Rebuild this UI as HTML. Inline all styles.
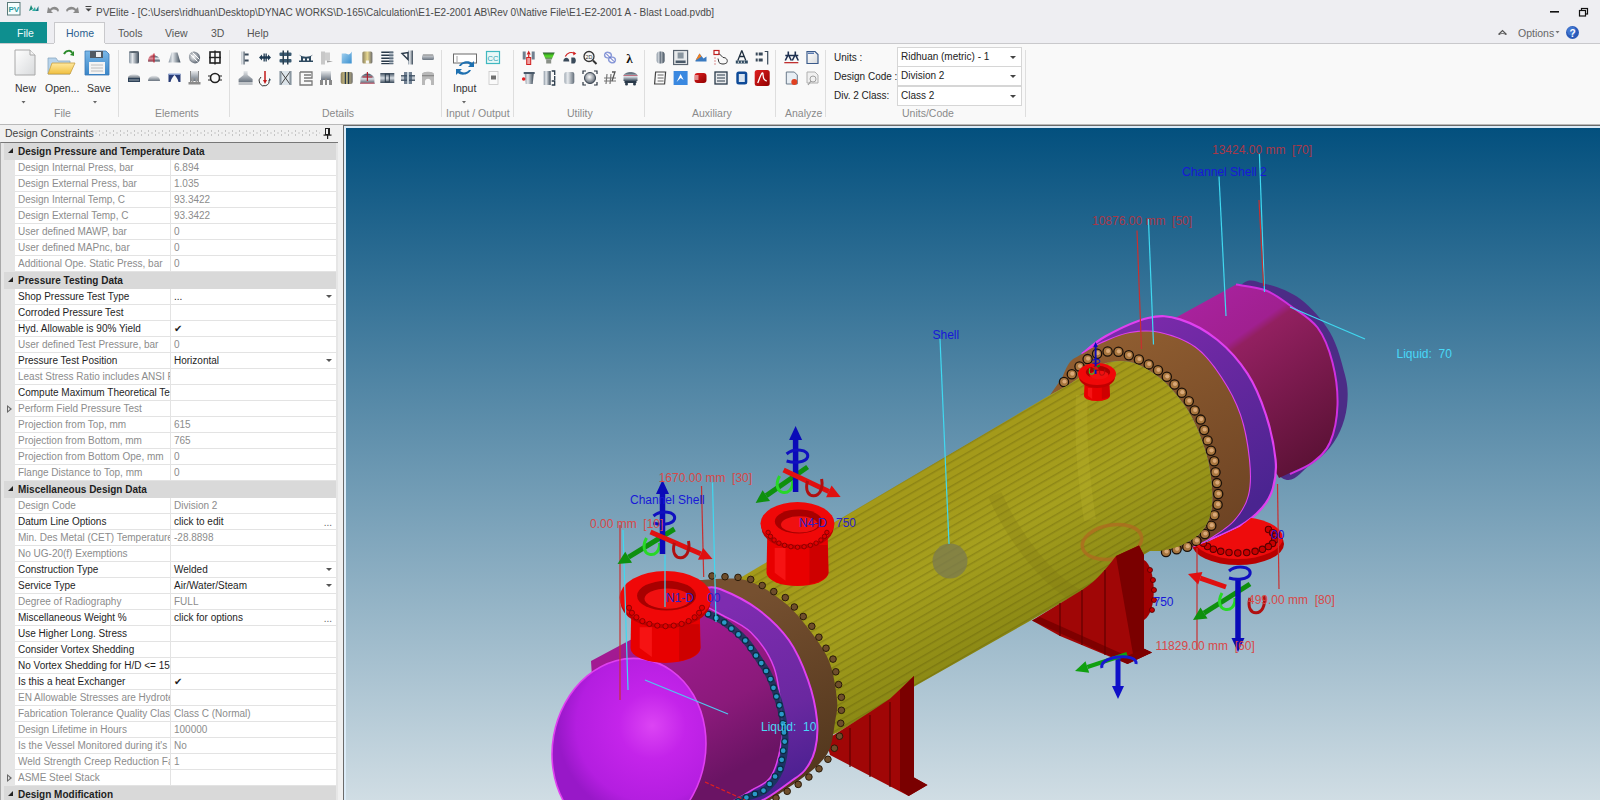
<!DOCTYPE html>
<html><head><meta charset="utf-8">
<style>
*{margin:0;padding:0;box-sizing:border-box}
html,body{width:1600px;height:800px;overflow:hidden;background:#f0f0f0;font-family:"Liberation Sans",sans-serif;font-size:10px;color:#222}
.a{position:absolute;white-space:nowrap}
#title{left:0;top:0;width:1600px;height:43px;background:#eeeef2}
#ribbon{left:0;top:43px;width:1600px;height:82px;background:#f9f9f9;border-top:1px solid #c9c9cc;border-bottom:1px solid #b9b9b9}
.sep{position:absolute;top:50px;width:1px;height:67px;background:#dedede}
.glab{position:absolute;top:107px;color:#8a8a8a;font-size:10.5px}
.btnlab{position:absolute;top:82px;color:#333;font-size:10.5px}
.tab{position:absolute;top:27px;font-size:10.5px;color:#555}
#dchdr{left:1px;top:125px;width:337px;height:17px;background:#f0f0f0}
#grid{left:0;top:142px;width:338px;height:658px;background:#e6e6e6;border-top:1px solid #777;border-left:1px solid #a8a8a8}
.row{position:absolute;left:15px;width:321px;height:16px;background:#fff;border-bottom:1px solid #e3e3e3}
.row .k{position:absolute;left:3px;top:2px;width:152px;overflow:hidden;white-space:nowrap}
.row .v{position:absolute;left:159px;top:2px;white-space:nowrap}
.row .d{position:absolute;left:155px;top:0;width:1px;height:16px;background:#e3e3e3}
.g{color:#8c8c8c}
.b{color:#1e1e1e}
.sh{position:absolute;left:4px;width:332px;height:17px;background:#d9d9d9}
.sh span{position:absolute;left:14px;top:3px;font-weight:bold;color:#1e1e1e}
.tri{position:absolute;left:4px;top:5px;width:0;height:0;border-left:5.5px solid transparent;border-bottom:5.5px solid #222}
.dd{position:absolute;right:4px;top:6px;width:0;height:0;border-left:3px solid transparent;border-right:3px solid transparent;border-top:3px solid #555}
.ell{position:absolute;right:4px;top:3px;color:#666}
.exp{position:absolute;left:-8px;top:4px;width:0;height:0;border-top:4px solid transparent;border-bottom:4px solid transparent;border-left:5px solid #666}
.exp:after{content:"";position:absolute;left:-4px;top:-2px;border-top:2px solid transparent;border-bottom:2px solid transparent;border-left:2px solid #e6e6e6}
#view{left:343px;top:125px;width:1257px;height:675px;background:#dcecf8;border-left:1px solid #6a6a6a;border-top:1px solid #6a6a6a}
#view3d{position:absolute;left:346px;top:128px;width:1254px;height:672px;background:linear-gradient(#03507e,#d0dde4)}
.cmb{position:absolute;left:897px;width:125px;height:20px;background:#fff;border:1px solid #d6d6d6}
.cmb span{position:absolute;left:3px;top:3px;color:#222}
.cmb i{position:absolute;right:5px;top:8px;width:0;height:0;border-left:3.5px solid transparent;border-right:3.5px solid transparent;border-top:3.5px solid #444}
.ulab{position:absolute;left:834px;color:#222}
</style></head><body>

<div id="title" class="a"></div>
<!-- title text -->
<div class="a" style="left:96px;top:7px;color:#4a4a4a;font-size:10px">PVElite - [C:\Users\ridhuan\Desktop\DYNAC WORKS\D-165\Calculation\E1-E2-2001 AB\Rev 0\Native File\E1-E2-2001 A - Blast Load.pvdb]</div>

<!--TITLEICONS-->
<svg class="a" style="left:0;top:0" width="100" height="22" viewBox="0 0 100 22">
<rect x="7.5" y="2.5" width="12.5" height="12.5" fill="#f4fefe" stroke="#5a7a7a" stroke-width="1"/>
<text x="13.8" y="12" font-size="8" font-weight="bold" text-anchor="middle" fill="#2a9aa0" font-family="Liberation Sans">PV</text>
<path d="M29,11 L31,5 L33,9 Z" fill="#1a8a7a"/><path d="M32,11 L35,7 L36,11 Z" fill="#30b0a0"/><path d="M35.5,11 L38.5,6 L38.5,11Z" fill="#1a7a8a"/>
<path d="M47,13 L48,7 L50,9 C53,6 57,6 59,10 L58,12 C56,9 53,9 51,11 L53,13 Z" fill="#8a8a8a"/>
<path d="M79,13 L78,7 L76,9 C73,6 69,6 66,10 L67,12 C69,9 73,9 75,11 L73,13 Z" fill="#8a8a8a"/>
<rect x="85.5" y="6" width="6" height="1" fill="#444"/><path d="M85.5,8.5 L91.5,8.5 L88.5,11.5Z" fill="#444"/>
</svg>
<svg class="a" style="left:1490px;top:0" width="110" height="43" viewBox="1490 0 110 43">
<rect x="1550" y="11" width="9" height="1.6" fill="#111"/>
<rect x="1581.5" y="8.5" width="6" height="5.5" fill="none" stroke="#111" stroke-width="1.2"/>
<rect x="1579.5" y="10.5" width="6" height="5.5" fill="#eeeef2" stroke="#111" stroke-width="1.2"/>
<path d="M1498.5,34.5 L1502.5,30.5 L1506.5,34.5" fill="none" stroke="#555" stroke-width="1.2"/><path d="M1499,35 C1500,33 1505,33 1506,35" fill="none" stroke="#555" stroke-width="1"/>
<path d="M1555.5,31 L1559.5,31 L1557.5,33.5Z" fill="#777"/>
<circle cx="1572.5" cy="32.5" r="6.5" fill="#2a5ab8"/><circle cx="1571.5" cy="31" r="4.5" fill="#4a80d8" opacity="0.7"/>
<text x="1572.5" y="36.5" font-size="10" font-weight="bold" text-anchor="middle" fill="#fff" font-family="Liberation Sans">?</text>
</svg>
<!--/TITLEICONS-->
<!-- tabs -->
<div class="a" style="left:0;top:22px;width:47px;height:21px;background:#0e8f8f"></div>
<div class="a" style="left:17px;top:27px;color:#eafafa;font-size:10.5px">File</div>
<div class="a" style="left:54px;top:22px;width:51px;height:22px;background:#f9f9f9;border:1px solid #c9c9cc;border-bottom:none"></div>
<div class="tab" style="left:66px;color:#2a5f8f">Home</div>
<div class="tab" style="left:118px">Tools</div>
<div class="tab" style="left:165px">View</div>
<div class="tab" style="left:211px">3D</div>
<div class="tab" style="left:247px">Help</div>

<div id="ribbon" class="a"></div>
<div class="a" style="left:54px;top:43px;width:51px;height:1px;background:#f9f9f9"></div>

<!--ICONS-->
<svg class="a" style="left:0;top:43px" width="1030" height="82" viewBox="0 43 1030 82">
<defs>
<linearGradient id="ig1" x1="0" y1="0" x2="1" y2="0"><stop offset="0" stop-color="#8a96a2"/><stop offset="0.35" stop-color="#e4e8ec"/><stop offset="1" stop-color="#3c4a58"/></linearGradient>
<linearGradient id="ig2" x1="0" y1="0" x2="0" y2="1"><stop offset="0" stop-color="#e8eaec"/><stop offset="1" stop-color="#6a7480"/></linearGradient>
<linearGradient id="ig3" x1="0" y1="0" x2="1" y2="0"><stop offset="0" stop-color="#8a8060"/><stop offset="0.5" stop-color="#e8d890"/><stop offset="1" stop-color="#6a6a6a"/></linearGradient>
<linearGradient id="ig4" x1="0" y1="0" x2="0" y2="1"><stop offset="0" stop-color="#3a4a5a"/><stop offset="0.5" stop-color="#d8dee4"/><stop offset="1" stop-color="#3a4a5a"/></linearGradient>
<linearGradient id="ig5" x1="0" y1="0" x2="1" y2="1"><stop offset="0" stop-color="#a8d4f0"/><stop offset="1" stop-color="#3a90d0"/></linearGradient>
<linearGradient id="igs" x1="0" y1="0" x2="0" y2="1"><stop offset="0" stop-color="#7ab8e8"/><stop offset="1" stop-color="#3a86c8"/></linearGradient>
<linearGradient id="igf" x1="0" y1="0" x2="0" y2="1"><stop offset="0" stop-color="#ffe9a0"/><stop offset="1" stop-color="#f0c040"/></linearGradient>
<linearGradient id="ign" x1="0" y1="0" x2="1" y2="1"><stop offset="0" stop-color="#ffffff"/><stop offset="1" stop-color="#d8dadc"/></linearGradient>
<radialGradient id="igb" cx="0.45" cy="0.4" r="0.6"><stop offset="0" stop-color="#ffffff"/><stop offset="1" stop-color="#5a6470"/></radialGradient>
<linearGradient id="igg" x1="0" y1="0" x2="0" y2="1"><stop offset="0" stop-color="#2a5a30"/><stop offset="0.5" stop-color="#50e020"/><stop offset="1" stop-color="#708070"/></linearGradient>
<linearGradient id="igr" x1="0" y1="0" x2="1" y2="1"><stop offset="0" stop-color="#e02020"/><stop offset="1" stop-color="#900000"/></linearGradient>
</defs>
<g transform="translate(134,57.5)"><rect x="-5" y="-6" width="10" height="12" rx="1.5" fill="url(#ig1)"/><ellipse cx="0" cy="-5.5" rx="5" ry="1" fill="#5a6670"/></g>
<g transform="translate(134,78)"><path d="M-6,0 C-6,-5 6,-5 6,0 Z" fill="url(#ig2)"/><rect x="-6" y="0" width="12" height="4" fill="#2e4258"/><line x1="-5" y1="2" x2="5" y2="2" stroke="#b8c0c8" stroke-width="0.8"/></g>
<g transform="translate(154,57.5)"><path d="M-6,4 C-6,-4 6,-4 6,4 Z" fill="url(#ig4)"/><path d="M-6,4 C-6,-3 -1,-3 0,-3 L0,4Z" fill="#e03040" opacity="0.5"/><line x1="0" y1="-4" x2="0" y2="5" stroke="#c02030" stroke-width="1.2"/></g>
<g transform="translate(154,78)"><path d="M-6,3 C-6,-4 6,-4 6,3 Z" fill="url(#ig2)"/></g>
<g transform="translate(174.5,57.5)"><path d="M-3,-5 L3,-5 L6,5 L-6,5 Z" fill="url(#ig1)"/></g>
<g transform="translate(174.5,78)"><path d="M-6,-4 L6,-4 L6,4 L4,4 C3,0 1,-2 0,-3 C-1,-2 -3,0 -4,4 L-6,4Z" fill="#2a3e78"/><rect x="-6" y="-4.5" width="12" height="1.5" fill="#8aa0d0"/></g>
<g transform="translate(194.5,57.5)"><ellipse cx="0" cy="0" rx="5.5" ry="6" fill="url(#igb)" transform="rotate(-30)"/><path d="M-4,-3 L3,4 M-2,-5 L5,2" stroke="#fff" stroke-width="1"/></g>
<g transform="translate(194.5,78)"><rect x="-4" y="-7" width="8" height="10" fill="url(#ig2)"/><line x1="-4" y1="-7" x2="-4" y2="5" stroke="#888" stroke-width="1"/><line x1="4" y1="-7" x2="4" y2="5" stroke="#888" stroke-width="1"/><rect x="-6" y="4" width="12" height="2.5" fill="#8a8a8a"/><rect x="-3" y="0" width="2" height="4" fill="#999"/><rect x="1" y="0" width="2" height="4" fill="#999"/></g>
<g transform="translate(215,57.5)"><rect x="-5" y="-5.5" width="10" height="11" fill="none" stroke="#222" stroke-width="1.6"/><line x1="0" y1="-7" x2="0" y2="7" stroke="#222" stroke-width="1.4"/><line x1="-6" y1="0" x2="6" y2="0" stroke="#222" stroke-width="1.4"/></g>
<g transform="translate(215,78)"><circle cx="0" cy="0" r="4.5" fill="none" stroke="#222" stroke-width="1.6"/><path d="M-7,-2 L-4,-2 M-7,2 L-4,2 M4,-2 L7,-2 M4,2 L7,2" stroke="#222" stroke-width="1.2"/></g>
<g transform="translate(245.6,57.5)"><rect x="-4" y="-6" width="3" height="13" fill="url(#ig1)"/><rect x="-1" y="-4" width="4" height="2" fill="#3a4a5a"/><rect x="-1" y="2" width="4" height="2" fill="#3a4a5a"/></g>
<g transform="translate(245.6,78)"><path d="M-2,-7 L2,-7 L2,-3 C4,-2 5,0 7,1 L7,4 L-7,4 L-7,1 C-5,0 -4,-2 -2,-3Z" fill="url(#ig2)"/><rect x="-7" y="4" width="14" height="3" fill="#c0c4c8"/></g>
<g transform="translate(265,57.5)"><path d="M-6,0 L-3,-3 L-3,3Z M6,0 L3,-3 L3,3Z" fill="#1e3a52"/><rect x="-3" y="-1.2" width="6" height="2.4" fill="#1e3a52"/><rect x="-1.5" y="-4" width="1.3" height="8" fill="#1e3a52"/><rect x="0.5" y="-4" width="1.3" height="8" fill="#1e3a52"/></g>
<g transform="translate(265,78)"><path d="M-4,-1 A5,5 0 1 0 4,2" fill="none" stroke="#333" stroke-width="1"/><line x1="0" y1="-7" x2="0" y2="4" stroke="#c01818" stroke-width="1.5"/><path d="M-2,2 L0,6 L2,2Z" fill="#c01818"/><path d="M4,0 L6,2 L4,3Z" fill="#2a4a5a"/></g>
<g transform="translate(285.5,57.5)"><rect x="-6" y="-5" width="12" height="3.5" rx="1" fill="#3a5a72"/><rect x="-6" y="1.5" width="12" height="3.5" rx="1" fill="#3a5a72"/><rect x="-3" y="-7" width="1.5" height="14" fill="#2a4050"/><rect x="1.5" y="-7" width="1.5" height="14" fill="#2a4050"/></g>
<g transform="translate(285.5,78)"><rect x="-6" y="-7" width="12" height="14" fill="#dce4ea"/><path d="M-5,-7 L5,7 M5,-7 L-5,7" stroke="#444" stroke-width="1"/><rect x="-6" y="-7" width="2" height="14" fill="#8a96a0"/><rect x="4" y="-7" width="2" height="14" fill="#8a96a0"/></g>
<g transform="translate(306,57.5)"><path d="M-7,-3 C-3,0 3,0 7,-3 L5,-1 L5,3 L7,3 L7,4.5 L-7,4.5 L-7,3 L-5,3 L-5,-1Z" fill="#2e4a60"/><rect x="-3" y="1" width="2" height="2" fill="#fff"/><rect x="1" y="1" width="2" height="2" fill="#fff"/></g>
<g transform="translate(306,78)"><path d="M-6,-6 L6,-6 L6,0 L-2,0 M-2,-3 L5,-3 M-6,-6 L-6,7 L6,7 L6,3 L-2,3" fill="none" stroke="#7a7a7a" stroke-width="1.3"/></g>
<g transform="translate(326,57.5)"><rect x="-5" y="-6" width="4" height="13" fill="#c8c8c8"/><rect x="-1" y="-5" width="5" height="8" fill="#b0b0b0" opacity="0.6"/><path d="M1,3 L7,4 L1,5Z" fill="#a0a0a0"/></g>
<g transform="translate(326,78)"><rect x="-5" y="-7" width="10" height="9" fill="url(#ig2)"/><rect x="-6" y="2" width="3" height="5" fill="#8a8a8a"/><rect x="-1" y="0" width="2" height="7" fill="#8a8a8a"/><rect x="3" y="2" width="3" height="5" fill="#8a8a8a"/></g>
<g transform="translate(346.7,57.5)"><path d="M-5,-4 L-1,-4 C1,-3 3,-2 5,-6 L5,6 L-5,6 Z" fill="url(#ig5)"/></g>
<g transform="translate(346.7,78)"><rect x="-6" y="-6" width="12" height="12" rx="2" fill="url(#ig3)"/><rect x="-2" y="-6" width="1.5" height="12" fill="#2a3a4a"/><rect x="1" y="-6" width="1.5" height="12" fill="#2a3a4a"/></g>
<g transform="translate(367.4,57.5)"><rect x="-5" y="-6" width="10" height="12" rx="1.5" fill="url(#ig3)"/><rect x="-1.5" y="3" width="3" height="3" fill="#fafafa"/></g>
<g transform="translate(367.4,78)"><path d="M-7,0 C-4,-6 4,-6 7,0 L7,6 L-7,6Z" fill="url(#ig4)"/><rect x="-7" y="4.5" width="14" height="1.5" fill="#c07080"/><line x1="0" y1="-6" x2="0" y2="3" stroke="#b02030" stroke-width="1.2"/><line x1="-5" y1="-1" x2="5" y2="-1" stroke="#b02030" stroke-width="1"/></g>
<g transform="translate(387.3,57.5)"><g fill="#2a3a4a"><rect x="-6" y="-6" width="12" height="1.5"/><rect x="-6" y="-3" width="12" height="1.5"/><rect x="-6" y="0" width="12" height="1.5"/><rect x="-6" y="3" width="12" height="1.5"/><rect x="-6" y="5.5" width="12" height="1.2"/></g><rect x="2" y="-6" width="4" height="12.5" fill="#8a9aa8" opacity="0.6"/></g>
<g transform="translate(387.3,78)"><rect x="-7" y="-5" width="14" height="10" fill="url(#ig4)"/><rect x="-2" y="-4" width="4" height="8" fill="none" stroke="#2a3a4a" stroke-width="1"/></g>
<g transform="translate(408,57.5)"><rect x="0" y="-7" width="5" height="14" fill="url(#ig1)"/><path d="M-6,-4 L0,-5 L0,2 Z" fill="none" stroke="#2a3a4a" stroke-width="1.4"/></g>
<g transform="translate(408,78)"><rect x="-7" y="-3" width="14" height="6" fill="url(#ig4)"/><rect x="-4" y="-6" width="8" height="12" fill="#3a5068" opacity="0.7"/><rect x="-1" y="-6" width="2" height="12" fill="#c8d4dc"/></g>
<g transform="translate(428,57.5)"><rect x="-6" y="-3.5" width="12" height="6" rx="1.5" fill="url(#ig2)"/><rect x="-5" y="-3" width="10" height="1" fill="#888"/></g>
<g transform="translate(428,78)"><path d="M-6,7 L-6,-4 C-6,-7 6,-7 6,-4 L6,7 L3,7 L3,3 C2,0 -2,0 -3,3 L-3,7Z" fill="#b8b8b8"/><rect x="-6" y="-3" width="12" height="1.3" fill="#8a8a8a"/></g>
<g transform="translate(493,57.5)"><rect x="-6.5" y="-6" width="13" height="12" fill="#e8f8f8" stroke="#40b8c0" stroke-width="1.2"/><text x="0" y="3" font-size="7.5" text-anchor="middle" fill="#30a0b0" font-family="Liberation Sans">CC</text></g>
<g transform="translate(493.5,78)"><rect x="-4.5" y="-6.5" width="9" height="13" fill="#fafafa" stroke="#c8c8c8" stroke-width="0.8"/><rect x="-2.5" y="-2.5" width="5" height="4" fill="#707070"/></g>
<g transform="translate(528.7,57.5)"><rect x="-6" y="-6" width="3" height="8" fill="#708090"/><rect x="3" y="-6" width="3" height="8" fill="#708090"/><rect x="-2" y="0" width="4" height="7" fill="#f0a0a0" stroke="#d02020" stroke-width="1"/><path d="M0,-7 L-2,-3 L2,-3Z" fill="#d02020"/><line x1="0" y1="-3" x2="0" y2="0" stroke="#d02020" stroke-width="1.2"/></g>
<g transform="translate(528.7,78)"><path d="M-4,-4 L5,-4 L4,6 L-3,6Z" fill="url(#ig1)"/><rect x="-5" y="-6" width="11" height="2" fill="#4a5a6a"/><circle cx="-5" cy="1" r="1.8" fill="#e02020"/></g>
<g transform="translate(548.7,57.5)"><path d="M-6,-5 L6,-5 L3,2 L-3,2Z" fill="url(#igg)"/><rect x="-2.5" y="2" width="5" height="4" fill="#8a9088"/></g>
<g transform="translate(548.7,78)"><rect x="-5" y="-7" width="7" height="14" fill="url(#ig1)"/><path d="M3,-7 L6,-7 L6,-3 M3,3 L6,3 L6,7 L3,7 M6,-2 L6,2" fill="none" stroke="#2a3a4a" stroke-width="1.3"/></g>
<g transform="translate(569.3,57.5)"><path d="M-6,4 C-6,-1 0,-1 0,4Z" fill="#3a4a5a"/><path d="M-4,-1 C-2,-5 2,-6 5,-4" fill="none" stroke="#d02020" stroke-width="1.2"/><path d="M4,-6 L7,-4 L4,-2Z" fill="#d02020"/><path d="M2,0 L5,0 C7,1 7,5 5,6 L2,6Z" fill="#3a4a5a"/></g>
<g transform="translate(569.3,78)"><rect x="-5" y="-6" width="10" height="12" rx="2" fill="url(#ig1)" opacity="0.8"/></g>
<g transform="translate(590,57.5)"><circle cx="-1" cy="-1" r="5" fill="#f8f8f8" stroke="#333" stroke-width="1.3"/><text x="-1" y="1.5" font-size="5.5" text-anchor="middle" fill="#333" font-family="Liberation Sans">2D</text><line x1="3" y1="3" x2="6.5" y2="6.5" stroke="#333" stroke-width="2"/></g>
<g transform="translate(590,78)"><circle cx="0" cy="0" r="5.5" fill="url(#igb)" stroke="#3a4450" stroke-width="1"/><path d="M-7,-4 L-7,-7 L-4,-7 M4,-7 L7,-7 L7,-4 M7,4 L7,7 L4,7 M-4,7 L-7,7 L-7,4" fill="none" stroke="#2a3440" stroke-width="1.2"/></g>
<g transform="translate(610,57.5)"><path d="M-5,-4 C-7,0 -1,2 1,-1 C3,-4 -3,-7 -5,-4 M5,4 C7,0 1,-2 -1,1 C-3,4 3,7 5,4" fill="none" stroke="#8a9ad8" stroke-width="1.5"/><line x1="-4" y1="-4" x2="4" y2="4" stroke="#4a5ac8" stroke-width="1"/></g>
<g transform="translate(610,78)"><path d="M-6,0 L6,0 M-6,3 L6,3 M-3,-4 L-4,6 M1,-4 L0,6" stroke="#777" stroke-width="1.2"/><path d="M2,-6 L5,-6 L2,3" fill="none" stroke="#555" stroke-width="1.3"/></g>
<g transform="translate(630.5,57.5)"><text x="-1" y="5" font-size="13" text-anchor="middle" fill="#111" font-family="Liberation Serif" font-weight="bold">&#955;</text></g>
<g transform="translate(630.5,78)"><path d="M-7,-2 C-7,-7 7,-7 7,-2 L7,3 L-7,3Z" fill="url(#ig4)"/><rect x="-7" y="-3" width="14" height="1" fill="#c07080"/><rect x="-6" y="3" width="12" height="2" fill="#2a3a4a"/><circle cx="-4" cy="6" r="1.5" fill="#2a3a4a"/><circle cx="4" cy="6" r="1.5" fill="#2a3a4a"/></g>
<g transform="translate(660.6,57.5)"><rect x="-4" y="-6" width="8" height="12" rx="3" fill="url(#ig1)"/><rect x="-1" y="-6" width="1" height="12" fill="#3a4a5a"/></g>
<g transform="translate(660.6,78)"><path d="M-5,-6 L5,-6 L4,6 L-6,6Z" fill="#fafafa" stroke="#444" stroke-width="1.2"/><path d="M-3,-3 L3,-3 M-3,0 L3,0 M-3,3 L3,3" stroke="#555" stroke-width="0.9"/></g>
<g transform="translate(680.6,57.5)"><rect x="-7" y="-7" width="14" height="14" fill="#e8eaec" stroke="#5a6470" stroke-width="1.2"/><rect x="-3" y="-5" width="6" height="6" fill="#8a96a0"/><rect x="-5" y="3" width="10" height="2.5" fill="#4a5a6a"/></g>
<g transform="translate(680.6,78)"><rect x="-7" y="-7" width="14" height="14" fill="#3a88e0"/><path d="M-4,4 L0,-4 L3,2 L0,0 Z" fill="#fff"/></g>
<g transform="translate(700.5,57.5)"><path d="M-5,3 L-1,-4 L3,1 L6,-1 L6,4 L-5,4Z" fill="#3a7ac0"/><path d="M-5,3 L-1,-4 L1,-1Z" fill="#f08020"/></g>
<g transform="translate(700.5,78)"><rect x="-6" y="-5" width="12" height="10" rx="3" fill="url(#igr)"/><rect x="-6" y="-3" width="4" height="5" fill="#fff" opacity="0.5"/></g>
<g transform="translate(721,57.5)"><rect x="-7" y="-7" width="5" height="4" fill="#fff" stroke="#c02020" stroke-width="1.2"/><path d="M-6,0 L-6,1 M-6,3 L-6,4 M-6,6 L-6,7" stroke="#c02020" stroke-width="1"/><path d="M-2,-4 L2,0 C5,0 7,2 6,5 C4,7 0,7 -2,5 L-3,1" fill="none" stroke="#333" stroke-width="1"/></g>
<g transform="translate(721,78)"><rect x="-6" y="-6" width="12" height="12" fill="#e8eaec" stroke="#2a3a4a" stroke-width="1.3"/><path d="M-4,-3 L4,-3 M-4,0 L4,0 M-4,3 L4,3" stroke="#2a3a4a" stroke-width="1.2"/></g>
<g transform="translate(741.8,57.5)"><path d="M0,-7 L-4,3 M0,-7 L4,3 M-2,-1 L2,-1" stroke="#1e2e3e" stroke-width="1.3" fill="none"/><rect x="-6" y="3" width="12" height="3" fill="#2e4a60"/><g fill="#fff"><rect x="-4" y="4" width="1.2" height="1.2"/><rect x="-1" y="4" width="1.2" height="1.2"/><rect x="2" y="4" width="1.2" height="1.2"/></g></g>
<g transform="translate(741.8,78)"><rect x="-5.5" y="-6.5" width="11" height="13" rx="2.5" fill="#0e4a98"/><rect x="-3" y="-4" width="6" height="8" fill="#d8e4f0"/></g>
<g transform="translate(761.7,57.5)"><g fill="#3a4a5a"><rect x="-6" y="-5" width="2" height="3"/><rect x="-3" y="-5" width="4" height="3"/><rect x="-6" y="1" width="2" height="3"/><rect x="-3" y="1" width="4" height="3"/></g><path d="M3,-6 L6,-6 L6,7" fill="none" stroke="#3a4a5a" stroke-width="1.2"/></g>
<g transform="translate(761.7,78)"><rect x="-7" y="-8" width="15" height="16" rx="2.5" fill="url(#igr)"/><path d="M-4,5 C-2,0 0,-6 1,-5 C2,-4 0,2 5,3" fill="none" stroke="#fff" stroke-width="1.3"/></g>
<g transform="translate(791.3,57.5)"><path d="M-6,3 L-3,-3 L0,3 M-3,-3 L-3,-6 M1,3 L4,-3 L7,3 M4,-3 L4,-6 M-6,-2 L7,-2" stroke="#1e3050" stroke-width="1.6" fill="none"/><rect x="-7" y="4.5" width="14" height="1.3" fill="#c03030"/></g>
<g transform="translate(812,57.5)"><path d="M-5,-6 L3,-6 L6,-3 L6,6 L-5,6Z" fill="url(#ign)" stroke="#3a5a8a" stroke-width="1.2"/><rect x="-4" y="-5" width="6" height="1.5" fill="#5a7ab0"/></g>
<g transform="translate(791.3,78)"><path d="M-5,-6 L3,-6 L6,-3 L6,6 L-5,6Z" fill="#e8eef4" stroke="#6a7a8a" stroke-width="1"/><circle cx="3" cy="4" r="3" fill="#e04020"/></g>
<g transform="translate(812,78)"><path d="M-5,-6 L3,-6 L6,-3 L6,5 L-5,5Z" fill="#f0f0f0" stroke="#b0b0b0" stroke-width="1"/><circle cx="1" cy="1" r="3" fill="none" stroke="#a0a0a0" stroke-width="1"/><line x1="-1" y1="3" x2="-4" y2="7" stroke="#a0a0a0" stroke-width="1.2"/></g>
<g><path d="M15,50 L30,50 L35,55 L35,75 L15,75 Z" fill="url(#ign)" stroke="#a8a8a8" stroke-width="1"/><path d="M30,50 L30,55 L35,55" fill="#f4f4f4" stroke="#a8a8a8" stroke-width="1"/></g>
<g><path d="M48,58 L48,74 L70,74 L70,61 L58,61 L56,58 Z" fill="#b8d4ec" stroke="#8aa8c0" stroke-width="0.8"/><path d="M48,74 L52,63 L75,63 L70,74 Z" fill="url(#igf)" stroke="#c8a040" stroke-width="0.8"/><path d="M64,54 C66,50 71,50 72,53" fill="none" stroke="#2a8a2a" stroke-width="2"/><path d="M70,55 L74,51 L74,56Z" fill="#2a8a2a"/></g>
<g><path d="M85,51 L106,51 L109,54 L109,75 L85,75 Z" fill="url(#igs)" stroke="#3a78b8" stroke-width="0.8"/><rect x="90" y="51" width="13" height="7" fill="#505a64"/><rect x="96" y="52" width="5" height="5" fill="#f0f0f0"/><rect x="89" y="62" width="16" height="12" fill="#f4f4f4"/><path d="M91,65 L103,65 M91,68 L103,68 M91,71 L103,71" stroke="#b0b0b0" stroke-width="0.8"/></g>
<path d="M21.5,101 L25.5,101 L23.5,103.5Z" fill="#666"/><path d="M93,101 L97,101 L95,103.5Z" fill="#666"/><path d="M462,101 L466,101 L464,103.5Z" fill="#666"/>
<g><rect x="453.5" y="54" width="23" height="9" fill="#fff" stroke="#6a6a6a" stroke-width="1"/><line x1="457" y1="56" x2="457" y2="62" stroke="#888" stroke-width="0.8"/>
<path d="M459,66 C461,61 469,60 472,63 L474,61 L474,67 L468,67 L470,65 C468,63 463,63 461,66Z" fill="#1e70b0"/>
<path d="M471,70 C469,75 461,76 458,73 L456,75 L456,69 L462,69 L460,71 C462,73 467,73 469,70Z" fill="#1e70b0"/></g>
</svg>
<!--/ICONS-->
<!-- group separators -->
<div class="sep" style="left:118px"></div>
<div class="sep" style="left:229px"></div>
<div class="sep" style="left:441px"></div>
<div class="sep" style="left:513px"></div>
<div class="sep" style="left:644px"></div>
<div class="sep" style="left:775px"></div>
<div class="sep" style="left:825px"></div>
<div class="sep" style="left:1025px"></div>

<div class="glab" style="left:54px">File</div>
<div class="glab" style="left:155px">Elements</div>
<div class="glab" style="left:322px">Details</div>
<div class="glab" style="left:446px">Input / Output</div>
<div class="glab" style="left:567px">Utility</div>
<div class="glab" style="left:692px">Auxiliary</div>
<div class="glab" style="left:785px">Analyze</div>
<div class="glab" style="left:902px">Units/Code</div>

<div class="btnlab" style="left:15px">New</div>
<div class="btnlab" style="left:45px">Open...</div>
<div class="btnlab" style="left:87px">Save</div>
<div class="btnlab" style="left:453px">Input</div>

<!-- units -->
<div class="ulab" style="top:52px">Units :</div>
<div class="ulab" style="top:71px">Design Code :</div>
<div class="ulab" style="top:90px">Div. 2 Class:</div>
<div class="cmb" style="top:47px"><span>Ridhuan (metric) - 1</span><i></i></div>
<div class="cmb" style="top:66px"><span>Division 2</span><i></i></div>
<div class="cmb" style="top:86px"><span>Class 2</span><i></i></div>

<!-- options -->
<div class="a" style="left:1518px;top:27px;color:#666;font-size:10.5px">Options</div>

<!-- Design constraints panel -->
<div id="dchdr" class="a"></div>
<div class="a" style="left:5px;top:127px;color:#444;font-size:10.5px">Design Constraints</div>
<svg class="a" style="left:90px;top:126px" width="250" height="15" viewBox="90 126 250 15">
<defs><pattern id="dots" width="7" height="4" patternUnits="userSpaceOnUse" x="92" y="130"><rect x="0" y="0.5" width="1" height="1" fill="#9a9a9a"/><rect x="3.5" y="2.5" width="1" height="1" fill="#9a9a9a"/></pattern></defs>
<rect x="92" y="130" width="228" height="6" fill="url(#dots)"/>
<rect x="325.5" y="128.5" width="4" height="6" fill="#f4f4f4" stroke="#222" stroke-width="1"/><rect x="328" y="129" width="1.5" height="5" fill="#222"/>
<rect x="323.5" y="134.5" width="8" height="1.2" fill="#222"/><rect x="327" y="135" width="1.2" height="4" fill="#222"/>
</svg>
<div id="grid" class="a"></div>
<!--GRID-->
<div class="sh" style="top:143px"><div class="tri"></div><span>Design Pressure and Temperature Data</span></div>
<div class="row" style="top:160px"><div class="k g">Design Internal Press, bar</div><div class="d"></div><div class="v g">6.894</div></div>
<div class="row" style="top:176px"><div class="k g">Design External Press, bar</div><div class="d"></div><div class="v g">1.035</div></div>
<div class="row" style="top:192px"><div class="k g">Design Internal Temp, C</div><div class="d"></div><div class="v g">93.3422</div></div>
<div class="row" style="top:208px"><div class="k g">Design External Temp, C</div><div class="d"></div><div class="v g">93.3422</div></div>
<div class="row" style="top:224px"><div class="k g">User defined MAWP, bar</div><div class="d"></div><div class="v g">0</div></div>
<div class="row" style="top:240px"><div class="k g">User defined MAPnc, bar</div><div class="d"></div><div class="v g">0</div></div>
<div class="row" style="top:256px"><div class="k g">Additional Ope. Static Press, bar</div><div class="d"></div><div class="v g">0</div></div>
<div class="sh" style="top:272px"><div class="tri"></div><span>Pressure Testing Data</span></div>
<div class="row" style="top:289px"><div class="k b">Shop Pressure Test Type</div><div class="d"></div><div class="v b">...</div><div class="dd"></div></div>
<div class="row" style="top:305px"><div class="k b">Corroded Pressure Test</div><div class="d"></div><div class="v b"></div></div>
<div class="row" style="top:321px"><div class="k b">Hyd. Allowable is 90% Yield</div><div class="d"></div><div class="v b chk">&#10004;</div></div>
<div class="row" style="top:337px"><div class="k g">User defined Test Pressure, bar</div><div class="d"></div><div class="v g">0</div></div>
<div class="row" style="top:353px"><div class="k b">Pressure Test Position</div><div class="d"></div><div class="v b">Horizontal</div><div class="dd"></div></div>
<div class="row" style="top:369px"><div class="k g">Least Stress Ratio includes ANSI Flange</div><div class="d"></div><div class="v g"></div></div>
<div class="row" style="top:385px"><div class="k b">Compute Maximum Theoretical Test Pressure</div><div class="d"></div><div class="v b"></div></div>
<div class="row" style="top:401px"><div class="exp"></div><div class="k g">Perform Field Pressure Test</div><div class="d"></div><div class="v g"></div></div>
<div class="row" style="top:417px"><div class="k g">Projection from Top, mm</div><div class="d"></div><div class="v g">615</div></div>
<div class="row" style="top:433px"><div class="k g">Projection from Bottom, mm</div><div class="d"></div><div class="v g">765</div></div>
<div class="row" style="top:449px"><div class="k g">Projection from Bottom Ope, mm</div><div class="d"></div><div class="v g">0</div></div>
<div class="row" style="top:465px"><div class="k g">Flange Distance to Top, mm</div><div class="d"></div><div class="v g">0</div></div>
<div class="sh" style="top:481px"><div class="tri"></div><span>Miscellaneous Design Data</span></div>
<div class="row" style="top:498px"><div class="k g">Design Code</div><div class="d"></div><div class="v g">Division 2</div></div>
<div class="row" style="top:514px"><div class="k b">Datum Line Options</div><div class="d"></div><div class="v b">click to edit</div><div class="ell">...</div></div>
<div class="row" style="top:530px"><div class="k g">Min. Des Metal (CET) Temperature</div><div class="d"></div><div class="v g">-28.8898</div></div>
<div class="row" style="top:546px"><div class="k g">No UG-20(f) Exemptions</div><div class="d"></div><div class="v g"></div></div>
<div class="row" style="top:562px"><div class="k b">Construction Type</div><div class="d"></div><div class="v b">Welded</div><div class="dd"></div></div>
<div class="row" style="top:578px"><div class="k b">Service Type</div><div class="d"></div><div class="v b">Air/Water/Steam</div><div class="dd"></div></div>
<div class="row" style="top:594px"><div class="k g">Degree of Radiography</div><div class="d"></div><div class="v g">FULL</div></div>
<div class="row" style="top:610px"><div class="k b">Miscellaneous Weight %</div><div class="d"></div><div class="v b">click for options</div><div class="ell">...</div></div>
<div class="row" style="top:626px"><div class="k b">Use Higher Long. Stress</div><div class="d"></div><div class="v b"></div></div>
<div class="row" style="top:642px"><div class="k b">Consider Vortex Shedding</div><div class="d"></div><div class="v b"></div></div>
<div class="row" style="top:658px"><div class="k b">No Vortex Shedding for H/D &lt;= 15</div><div class="d"></div><div class="v b"></div></div>
<div class="row" style="top:674px"><div class="k b">Is this a heat Exchanger</div><div class="d"></div><div class="v b chk">&#10004;</div></div>
<div class="row" style="top:690px"><div class="k g">EN Allowable Stresses are Hydrotest</div><div class="d"></div><div class="v g"></div></div>
<div class="row" style="top:706px"><div class="k g">Fabrication Tolerance Quality Class</div><div class="d"></div><div class="v g">Class C (Normal)</div></div>
<div class="row" style="top:722px"><div class="k g">Design Lifetime in Hours</div><div class="d"></div><div class="v g">100000</div></div>
<div class="row" style="top:738px"><div class="k g">Is the Vessel Monitored during it's life</div><div class="d"></div><div class="v g">No</div></div>
<div class="row" style="top:754px"><div class="k g">Weld Strength Creep Reduction Factor</div><div class="d"></div><div class="v g">1</div></div>
<div class="row" style="top:770px"><div class="exp"></div><div class="k g">ASME Steel Stack</div><div class="d"></div><div class="v g"></div></div>
<div class="sh" style="top:786px"><div class="tri"></div><span>Design Modification</span></div>

<!--/GRID-->

<div id="view" class="a"></div>
<div id="view3d"></div>
<!--MODEL-->
<svg class="a" style="left:346px;top:128px" width="1254" height="672" viewBox="346 128 1254 672">
<defs>
<linearGradient id="gy" gradientUnits="userSpaceOnUse" x1="930" y1="500" x2="1010" y2="640">
 <stop offset="0" stop-color="#a49a1a"/><stop offset="0.4" stop-color="#a6a01e"/><stop offset="1" stop-color="#8a8814"/></linearGradient>
<linearGradient id="gch" gradientUnits="userSpaceOnUse" x1="640" y1="640" x2="720" y2="780">
 <stop offset="0" stop-color="#a21a92"/><stop offset="0.6" stop-color="#8a1a7a"/><stop offset="1" stop-color="#6a1464"/></linearGradient>
<linearGradient id="grc" gradientUnits="userSpaceOnUse" x1="1209" y1="277" x2="1330" y2="450">
 <stop offset="0" stop-color="#aa22a0"/><stop offset="0.31" stop-color="#a02090"/><stop offset="0.35" stop-color="#922060"/><stop offset="1" stop-color="#5c1236"/></linearGradient>
<radialGradient id="ghead" gradientUnits="userSpaceOnUse" cx="648" cy="722" r="95">
 <stop offset="0" stop-color="#dc44f4"/><stop offset="0.35" stop-color="#c424ea"/><stop offset="0.8" stop-color="#b41ee0"/><stop offset="1" stop-color="#9818c8"/></radialGradient>
<linearGradient id="gpr" gradientUnits="userSpaceOnUse" x1="1150" y1="320" x2="1260" y2="500">
 <stop offset="0" stop-color="#7a2aaa"/><stop offset="1" stop-color="#4a2490"/></linearGradient>
<linearGradient id="gpl" gradientUnits="userSpaceOnUse" x1="740" y1="600" x2="810" y2="780">
 <stop offset="0" stop-color="#7e2cb0"/><stop offset="0.6" stop-color="#6a28a0"/><stop offset="1" stop-color="#4a2090"/></linearGradient>
<linearGradient id="gbr" gradientUnits="userSpaceOnUse" x1="1140" y1="330" x2="1240" y2="520">
 <stop offset="0" stop-color="#8e5c30"/><stop offset="1" stop-color="#6e4424"/></linearGradient>
<linearGradient id="gbl" gradientUnits="userSpaceOnUse" x1="760" y1="590" x2="830" y2="760">
 <stop offset="0" stop-color="#765030"/><stop offset="1" stop-color="#54381e"/></linearGradient>
<pattern id="str" width="7" height="7" patternUnits="userSpaceOnUse" patternTransform="rotate(-30)">
 <rect width="7" height="1.5" fill="#4a4404" opacity="0.26"/></pattern>

</defs>
<path d="M1240.0,286.0 C1249.0,276.6 1254.0,281.4 1264.0,283.5 C1274.0,285.6 1289.0,290.5 1300.0,298.7 C1311.0,306.9 1322.5,319.8 1330.0,332.5 C1337.5,345.2 1342.1,363.8 1345.0,375.0 C1347.9,386.2 1347.9,391.7 1347.5,400.0 C1347.1,408.3 1345.4,417.1 1342.5,425.0 C1339.6,432.9 1335.4,440.8 1330.0,447.5 C1324.6,454.2 1318.0,459.9 1310.0,465.0 C1302.0,470.1 1293.7,485.5 1282.0,478.0 C1270.3,470.5 1252.0,443.0 1240.0,420.0 C1228.0,397.0 1210.0,362.3 1210.0,340.0 C1210.0,317.7 1231.0,295.4 1240.0,286.0 Z" fill="#4c2c86"/>
<path d="M1176.0,317.5 L1236.0,284.5 L1236.0,284.5 C1241.0,285.5 1257.0,287.0 1266.0,290.5 C1275.0,294.0 1281.4,299.3 1290.0,305.5 C1298.6,311.7 1310.4,318.0 1317.5,327.5 C1324.6,337.0 1329.2,349.6 1332.5,362.5 C1335.8,375.4 1337.9,391.7 1337.5,405.0 C1337.1,418.3 1334.2,432.9 1330.0,442.5 C1325.8,452.1 1315.4,459.2 1312.5,462.5 L1279.0,478.0 L1250.0,420.0 L1200.0,340.0 Z" fill="url(#grc)"/>
<path d="M1236.0,284.5 C1241.0,285.5 1257.0,287.0 1266.0,290.5 C1275.0,294.0 1281.4,299.3 1290.0,305.5 C1298.6,311.7 1310.4,318.0 1317.5,327.5 C1324.6,337.0 1329.2,349.6 1332.5,362.5 C1335.8,375.4 1337.9,391.7 1337.5,405.0 C1337.1,418.3 1334.2,432.9 1330.0,442.5 C1325.8,452.1 1319.2,457.2 1312.5,462.5 C1305.8,467.8 1293.8,472.1 1290.0,474.0" fill="none" stroke="#d030e0" stroke-width="2"/>
<path d="M1082.0,354.0 L1082.0,354.0 C1086.0,351.0 1095.0,342.0 1106.0,336.0 C1117.0,330.0 1135.7,320.8 1148.0,318.0 C1160.3,315.2 1168.4,315.7 1180.0,319.4 C1191.6,323.1 1206.2,330.9 1217.5,340.0 C1228.8,349.1 1239.4,361.2 1247.5,373.7 C1255.6,386.2 1261.3,400.6 1266.0,415.0 C1270.7,429.4 1274.4,447.8 1275.6,460.0 C1276.8,472.2 1275.3,480.0 1273.0,488.0 C1270.7,496.0 1267.5,501.7 1262.0,508.0 C1256.5,514.3 1248.7,520.7 1240.0,526.0 C1231.3,531.3 1215.0,537.7 1210.0,540.0 L1190.0,548.0 C1193.3,546.3 1202.7,542.7 1210.0,538.0 C1217.3,533.3 1227.7,527.2 1234.0,520.0 C1240.3,512.8 1245.5,505.0 1248.0,495.0 C1250.5,485.0 1250.3,473.3 1249.0,460.0 C1247.7,446.7 1244.7,428.8 1240.0,415.0 C1235.3,401.2 1228.5,388.8 1221.0,377.5 C1213.5,366.2 1205.2,354.9 1195.0,347.5 C1184.8,340.1 1170.8,335.4 1160.0,333.0 C1149.2,330.6 1139.7,331.3 1130.0,333.0 C1120.3,334.7 1110.0,339.5 1102.0,343.0 C1094.0,346.5 1085.3,352.2 1082.0,354.0 Z" fill="url(#gpr)"/>
<path d="M1082.0,354.0 C1086.0,351.0 1095.0,342.0 1106.0,336.0 C1117.0,330.0 1135.7,320.8 1148.0,318.0 C1160.3,315.2 1168.4,315.7 1180.0,319.4 C1191.6,323.1 1206.2,330.9 1217.5,340.0 C1228.8,349.1 1239.4,361.2 1247.5,373.7 C1255.6,386.2 1261.3,400.6 1266.0,415.0 C1270.7,429.4 1274.4,447.8 1275.6,460.0 C1276.8,472.2 1275.3,480.0 1273.0,488.0 C1270.7,496.0 1267.5,501.7 1262.0,508.0 C1256.5,514.3 1248.7,520.7 1240.0,526.0 C1231.3,531.3 1215.0,537.7 1210.0,540.0" fill="none" stroke="#e040f0" stroke-width="2.2"/>
<path d="M1082.0,354.0 C1085.3,352.2 1094.0,346.5 1102.0,343.0 C1110.0,339.5 1120.3,334.7 1130.0,333.0 C1139.7,331.3 1149.2,330.6 1160.0,333.0 C1170.8,335.4 1184.8,340.1 1195.0,347.5 C1205.2,354.9 1213.5,366.2 1221.0,377.5 C1228.5,388.8 1235.3,401.2 1240.0,415.0 C1244.7,428.8 1247.7,446.7 1249.0,460.0 C1250.3,473.3 1250.5,485.0 1248.0,495.0 C1245.5,505.0 1240.3,512.8 1234.0,520.0 C1227.7,527.2 1217.3,533.3 1210.0,538.0 C1202.7,542.7 1193.3,546.3 1190.0,548.0" fill="none" stroke="#e040f0" stroke-width="2.2"/>
<path d="M1062.0,378.0 L1062.0,378.0 C1063.3,375.3 1066.7,366.0 1070.0,362.0 C1073.3,358.0 1076.7,357.2 1082.0,354.0 C1087.3,350.8 1094.0,346.5 1102.0,343.0 C1110.0,339.5 1120.3,334.7 1130.0,333.0 C1139.7,331.3 1149.2,330.6 1160.0,333.0 C1170.8,335.4 1184.8,340.1 1195.0,347.5 C1205.2,354.9 1213.5,366.2 1221.0,377.5 C1228.5,388.8 1235.3,401.2 1240.0,415.0 C1244.7,428.8 1247.7,446.7 1249.0,460.0 C1250.3,473.3 1250.5,485.0 1248.0,495.0 C1245.5,505.0 1240.3,512.8 1234.0,520.0 C1227.7,527.2 1217.3,533.3 1210.0,538.0 C1202.7,542.7 1193.3,546.3 1190.0,548.0 L1160.0,551.0 C1163.7,550.0 1174.8,548.5 1182.0,545.0 C1189.2,541.5 1198.0,536.7 1203.0,530.0 C1208.0,523.3 1211.0,515.8 1212.0,505.0 C1213.0,494.2 1211.5,477.8 1209.0,465.0 C1206.5,452.2 1201.5,438.5 1197.0,428.0 C1192.5,417.5 1188.2,410.3 1182.0,402.0 C1175.8,393.7 1168.7,384.7 1160.0,378.0 C1151.3,371.3 1140.0,364.2 1130.0,362.0 C1120.0,359.8 1110.0,361.3 1100.0,365.0 C1090.0,368.7 1078.3,379.0 1070.0,384.0 C1061.7,389.0 1053.3,393.2 1050.0,395.0 Z" fill="url(#gbr)"/>
<g><circle cx="1064.0" cy="382.0" r="4.6" fill="#a8763e" stroke="#1a1008" stroke-width="1.3"/><circle cx="1064.5" cy="381.5" r="2.1" fill="#d8a878"/><circle cx="1071.8" cy="374.2" r="4.6" fill="#a8763e" stroke="#1a1008" stroke-width="1.3"/><circle cx="1072.3" cy="373.7" r="2.1" fill="#d8a878"/><circle cx="1079.5" cy="366.5" r="4.6" fill="#a8763e" stroke="#1a1008" stroke-width="1.3"/><circle cx="1080.0" cy="366.0" r="2.1" fill="#d8a878"/><circle cx="1087.6" cy="359.1" r="4.6" fill="#a8763e" stroke="#1a1008" stroke-width="1.3"/><circle cx="1088.1" cy="358.6" r="2.1" fill="#d8a878"/><circle cx="1097.1" cy="353.7" r="4.6" fill="#a8763e" stroke="#1a1008" stroke-width="1.3"/><circle cx="1097.6" cy="353.2" r="2.1" fill="#d8a878"/><circle cx="1107.6" cy="351.5" r="4.6" fill="#a8763e" stroke="#1a1008" stroke-width="1.3"/><circle cx="1108.1" cy="351.0" r="2.1" fill="#d8a878"/><circle cx="1118.4" cy="351.8" r="4.6" fill="#a8763e" stroke="#1a1008" stroke-width="1.3"/><circle cx="1118.9" cy="351.3" r="2.1" fill="#d8a878"/><circle cx="1128.8" cy="355.3" r="4.6" fill="#a8763e" stroke="#1a1008" stroke-width="1.3"/><circle cx="1129.3" cy="354.8" r="2.1" fill="#d8a878"/><circle cx="1138.9" cy="359.5" r="4.6" fill="#a8763e" stroke="#1a1008" stroke-width="1.3"/><circle cx="1139.4" cy="359.0" r="2.1" fill="#d8a878"/><circle cx="1148.7" cy="364.4" r="4.6" fill="#a8763e" stroke="#1a1008" stroke-width="1.3"/><circle cx="1149.2" cy="363.9" r="2.1" fill="#d8a878"/><circle cx="1158.0" cy="370.3" r="4.6" fill="#a8763e" stroke="#1a1008" stroke-width="1.3"/><circle cx="1158.5" cy="369.8" r="2.1" fill="#d8a878"/><circle cx="1166.8" cy="376.8" r="4.6" fill="#a8763e" stroke="#1a1008" stroke-width="1.3"/><circle cx="1167.3" cy="376.3" r="2.1" fill="#d8a878"/><circle cx="1174.5" cy="384.5" r="4.6" fill="#a8763e" stroke="#1a1008" stroke-width="1.3"/><circle cx="1175.0" cy="384.0" r="2.1" fill="#d8a878"/><circle cx="1181.8" cy="392.7" r="4.6" fill="#a8763e" stroke="#1a1008" stroke-width="1.3"/><circle cx="1182.3" cy="392.2" r="2.1" fill="#d8a878"/><circle cx="1188.8" cy="401.2" r="4.6" fill="#a8763e" stroke="#1a1008" stroke-width="1.3"/><circle cx="1189.3" cy="400.7" r="2.1" fill="#d8a878"/><circle cx="1194.7" cy="410.4" r="4.6" fill="#a8763e" stroke="#1a1008" stroke-width="1.3"/><circle cx="1195.2" cy="409.9" r="2.1" fill="#d8a878"/><circle cx="1200.7" cy="419.6" r="4.6" fill="#a8763e" stroke="#1a1008" stroke-width="1.3"/><circle cx="1201.2" cy="419.1" r="2.1" fill="#d8a878"/><circle cx="1204.2" cy="430.0" r="4.6" fill="#a8763e" stroke="#1a1008" stroke-width="1.3"/><circle cx="1204.7" cy="429.5" r="2.1" fill="#d8a878"/><circle cx="1207.6" cy="440.4" r="4.6" fill="#a8763e" stroke="#1a1008" stroke-width="1.3"/><circle cx="1208.1" cy="439.9" r="2.1" fill="#d8a878"/><circle cx="1211.0" cy="450.8" r="4.6" fill="#a8763e" stroke="#1a1008" stroke-width="1.3"/><circle cx="1211.5" cy="450.3" r="2.1" fill="#d8a878"/><circle cx="1214.2" cy="461.3" r="4.6" fill="#a8763e" stroke="#1a1008" stroke-width="1.3"/><circle cx="1214.7" cy="460.8" r="2.1" fill="#d8a878"/><circle cx="1215.5" cy="472.2" r="4.6" fill="#a8763e" stroke="#1a1008" stroke-width="1.3"/><circle cx="1216.0" cy="471.7" r="2.1" fill="#d8a878"/><circle cx="1216.9" cy="483.1" r="4.6" fill="#a8763e" stroke="#1a1008" stroke-width="1.3"/><circle cx="1217.4" cy="482.6" r="2.1" fill="#d8a878"/><circle cx="1218.2" cy="494.0" r="4.6" fill="#a8763e" stroke="#1a1008" stroke-width="1.3"/><circle cx="1218.7" cy="493.5" r="2.1" fill="#d8a878"/><circle cx="1217.6" cy="504.7" r="4.6" fill="#a8763e" stroke="#1a1008" stroke-width="1.3"/><circle cx="1218.1" cy="504.2" r="2.1" fill="#d8a878"/><circle cx="1214.4" cy="515.2" r="4.6" fill="#a8763e" stroke="#1a1008" stroke-width="1.3"/><circle cx="1214.9" cy="514.7" r="2.1" fill="#d8a878"/><circle cx="1211.3" cy="525.7" r="4.6" fill="#a8763e" stroke="#1a1008" stroke-width="1.3"/><circle cx="1211.8" cy="525.2" r="2.1" fill="#d8a878"/><circle cx="1204.9" cy="534.0" r="4.6" fill="#a8763e" stroke="#1a1008" stroke-width="1.3"/><circle cx="1205.4" cy="533.5" r="2.1" fill="#d8a878"/><circle cx="1196.4" cy="540.9" r="4.6" fill="#a8763e" stroke="#1a1008" stroke-width="1.3"/><circle cx="1196.9" cy="540.4" r="2.1" fill="#d8a878"/><circle cx="1187.3" cy="546.7" r="4.6" fill="#a8763e" stroke="#1a1008" stroke-width="1.3"/><circle cx="1187.8" cy="546.2" r="2.1" fill="#d8a878"/><circle cx="1176.6" cy="549.3" r="4.6" fill="#a8763e" stroke="#1a1008" stroke-width="1.3"/><circle cx="1177.1" cy="548.8" r="2.1" fill="#d8a878"/><circle cx="1166.0" cy="552.0" r="4.6" fill="#a8763e" stroke="#1a1008" stroke-width="1.3"/><circle cx="1166.5" cy="551.5" r="2.1" fill="#d8a878"/></g>
<clipPath id="cbf"><path d="M1170,556 L1210,541 L1240,527 L1262,509 L1274,490 L1300,470 L1300,600 L1170,600 Z"/></clipPath><g clip-path="url(#cbf)"><ellipse cx="1238" cy="544" rx="46" ry="21" fill="#b80000"/><ellipse cx="1238" cy="538" rx="45" ry="21" fill="#ee0c0c"/><g><circle cx="1268.5" cy="529.5" r="3.2" fill="#c80000" stroke="#5a0000" stroke-width="1.1"/><circle cx="1272.6" cy="532.7" r="3.2" fill="#c80000" stroke="#5a0000" stroke-width="1.1"/><circle cx="1274.7" cy="536.3" r="3.2" fill="#c80000" stroke="#5a0000" stroke-width="1.1"/><circle cx="1274.7" cy="539.9" r="3.2" fill="#c80000" stroke="#5a0000" stroke-width="1.1"/><circle cx="1272.5" cy="543.4" r="3.2" fill="#c80000" stroke="#5a0000" stroke-width="1.1"/><circle cx="1268.4" cy="546.6" r="3.2" fill="#c80000" stroke="#5a0000" stroke-width="1.1"/><circle cx="1262.4" cy="549.3" r="3.2" fill="#c80000" stroke="#5a0000" stroke-width="1.1"/><circle cx="1255.1" cy="551.3" r="3.2" fill="#c80000" stroke="#5a0000" stroke-width="1.1"/><circle cx="1246.7" cy="552.6" r="3.2" fill="#c80000" stroke="#5a0000" stroke-width="1.1"/><circle cx="1237.8" cy="553.0" r="3.2" fill="#c80000" stroke="#5a0000" stroke-width="1.1"/><circle cx="1229.0" cy="552.5" r="3.2" fill="#c80000" stroke="#5a0000" stroke-width="1.1"/><circle cx="1220.7" cy="551.3" r="3.2" fill="#c80000" stroke="#5a0000" stroke-width="1.1"/><circle cx="1213.3" cy="549.2" r="3.2" fill="#c80000" stroke="#5a0000" stroke-width="1.1"/><circle cx="1207.5" cy="546.5" r="3.2" fill="#c80000" stroke="#5a0000" stroke-width="1.1"/><circle cx="1203.4" cy="543.3" r="3.2" fill="#c80000" stroke="#5a0000" stroke-width="1.1"/><circle cx="1201.3" cy="539.7" r="3.2" fill="#c80000" stroke="#5a0000" stroke-width="1.1"/></g></g>
<path d="M740.0,578.0 L1050.0,395.0 L1070.0,384.0 C1075.0,380.8 1090.0,368.7 1100.0,365.0 C1110.0,361.3 1120.0,359.8 1130.0,362.0 C1140.0,364.2 1151.3,371.3 1160.0,378.0 C1168.7,384.7 1175.8,393.7 1182.0,402.0 C1188.2,410.3 1192.5,417.5 1197.0,428.0 C1201.5,438.5 1206.5,452.2 1209.0,465.0 C1211.5,477.8 1213.0,494.2 1212.0,505.0 C1211.0,515.8 1208.0,523.3 1203.0,530.0 C1198.0,536.7 1189.2,541.5 1182.0,545.0 C1174.8,548.5 1163.7,550.0 1160.0,551.0 L1150.0,551.0 L1100.0,580.6 L1025.0,623.7 L912.5,687.5 L837.5,732.5 L820.0,740.0 Z" fill="url(#gy)"/>
<path d="M740.0,578.0 L1050.0,395.0 L1070.0,384.0 C1075.0,380.8 1090.0,368.7 1100.0,365.0 C1110.0,361.3 1120.0,359.8 1130.0,362.0 C1140.0,364.2 1151.3,371.3 1160.0,378.0 C1168.7,384.7 1175.8,393.7 1182.0,402.0 C1188.2,410.3 1192.5,417.5 1197.0,428.0 C1201.5,438.5 1206.5,452.2 1209.0,465.0 C1211.5,477.8 1213.0,494.2 1212.0,505.0 C1211.0,515.8 1208.0,523.3 1203.0,530.0 C1198.0,536.7 1189.2,541.5 1182.0,545.0 C1174.8,548.5 1163.7,550.0 1160.0,551.0 L1150.0,551.0 L1100.0,580.6 L1025.0,623.7 L912.5,687.5 L837.5,732.5 L820.0,740.0 Z" fill="url(#str)"/>
<circle cx="950" cy="561" r="17.5" fill="#7a7a50" opacity="0.75"/>
<ellipse cx="1112" cy="542" rx="30" ry="17" fill="none" stroke="#b06a20" stroke-width="3.5" opacity="0.75" transform="rotate(-10 1112 542)"/>
<path d="M995,495 C1015,540 1050,585 1085,600" fill="none" stroke="#7a7410" stroke-width="14" opacity="0.22"/><path d="M1082,395 C1080,430 1082,470 1090,520" fill="none" stroke="#c0b830" stroke-width="12" opacity="0.25"/>
<path d="M1144,560 C1156,566 1158,612 1144,620 Z" fill="#a00000"/>
<g fill="#c00000" stroke="#500000" stroke-width="0.8"><circle cx="1150" cy="570" r="2.5"/><circle cx="1153" cy="580" r="2.5"/><circle cx="1154" cy="590" r="2.5"/><circle cx="1154" cy="600" r="2.5"/><circle cx="1152" cy="610" r="2.5"/></g>
<path d="M1032,620.6 L1082,590 C1098,580 1108,566 1116,556 L1139,545.6 L1144,555 L1144,648.7 L1152,652.5 L1127.5,664 L1060,636 Z" fill="#a00606"/>
<path d="M1116,556 L1139,545.6 L1144,555 L1144,648.7 L1152,652.5 L1134,660 Z" fill="#7a0000"/>
<path d="M1032,620.6 L1127.5,664 L1152,652.5 L1144,648.7 L1127,656 L1040,617Z" fill="#7e0000"/>
<g stroke="#600000" stroke-width="1.2"><line x1="1060" y1="603" x2="1060" y2="636"/><line x1="1082" y1="590" x2="1082" y2="645"/><line x1="1105" y1="570" x2="1105" y2="655"/></g>
<path d="M826,740 L870,712 L890,698.7 L914,676 L914,777.5 L927.5,785 L908.7,796 L830,755 Z" fill="#a00606"/>
<path d="M900,690 L914,676 L914,777.5 L927.5,785 L908.7,796 L900,790 Z" fill="#7a0000"/>
<g stroke="#600000" stroke-width="1.2"><line x1="850" y1="728" x2="850" y2="767"/><line x1="870" y1="715" x2="870" y2="777"/><line x1="890" y1="702" x2="890" y2="787"/></g>
<path d="M700.0,580.0 L700.0,580.0 C707.5,580.0 731.2,576.5 745.0,580.0 C758.8,583.5 772.1,593.1 782.5,601.0 C792.9,608.9 799.8,617.5 807.5,627.5 C815.2,637.5 824.1,648.9 829.0,661.0 C833.9,673.1 836.0,689.8 837.0,700.0 C838.0,710.2 836.2,714.0 835.0,722.0 C833.8,730.0 832.5,741.2 830.0,748.0 C827.5,754.8 824.2,758.3 820.0,763.0 C815.8,767.7 810.8,771.5 805.0,776.0 C799.2,780.5 790.8,786.0 785.0,790.0 C779.2,794.0 775.0,797.3 770.0,800.0 C765.0,802.7 757.5,805.0 755.0,806.0 L740.0,808.0 L690.0,808.0 L690.0,590.0 Z" fill="url(#gbl)"/>
<g><circle cx="712.0" cy="576.0" r="3.3" fill="#6e4e2c" stroke="#2a1a08" stroke-width="1"/><circle cx="725.0" cy="576.7" r="3.3" fill="#6e4e2c" stroke="#2a1a08" stroke-width="1"/><circle cx="738.0" cy="577.4" r="3.3" fill="#6e4e2c" stroke="#2a1a08" stroke-width="1"/><circle cx="750.7" cy="579.4" r="3.3" fill="#6e4e2c" stroke="#2a1a08" stroke-width="1"/><circle cx="762.2" cy="585.5" r="3.3" fill="#6e4e2c" stroke="#2a1a08" stroke-width="1"/><circle cx="773.8" cy="591.6" r="3.3" fill="#6e4e2c" stroke="#2a1a08" stroke-width="1"/><circle cx="785.3" cy="597.6" r="3.3" fill="#6e4e2c" stroke="#2a1a08" stroke-width="1"/><circle cx="794.3" cy="607.0" r="3.3" fill="#6e4e2c" stroke="#2a1a08" stroke-width="1"/><circle cx="803.2" cy="616.5" r="3.3" fill="#6e4e2c" stroke="#2a1a08" stroke-width="1"/><circle cx="811.8" cy="626.3" r="3.3" fill="#6e4e2c" stroke="#2a1a08" stroke-width="1"/><circle cx="818.9" cy="637.2" r="3.3" fill="#6e4e2c" stroke="#2a1a08" stroke-width="1"/><circle cx="826.0" cy="648.2" r="3.3" fill="#6e4e2c" stroke="#2a1a08" stroke-width="1"/><circle cx="833.0" cy="659.1" r="3.3" fill="#6e4e2c" stroke="#2a1a08" stroke-width="1"/><circle cx="835.8" cy="671.8" r="3.3" fill="#6e4e2c" stroke="#2a1a08" stroke-width="1"/><circle cx="838.6" cy="684.6" r="3.3" fill="#6e4e2c" stroke="#2a1a08" stroke-width="1"/><circle cx="841.4" cy="697.3" r="3.3" fill="#6e4e2c" stroke="#2a1a08" stroke-width="1"/><circle cx="841.4" cy="710.3" r="3.3" fill="#6e4e2c" stroke="#2a1a08" stroke-width="1"/><circle cx="840.7" cy="723.3" r="3.3" fill="#6e4e2c" stroke="#2a1a08" stroke-width="1"/><circle cx="839.5" cy="736.2" r="3.3" fill="#6e4e2c" stroke="#2a1a08" stroke-width="1"/><circle cx="834.4" cy="748.2" r="3.3" fill="#6e4e2c" stroke="#2a1a08" stroke-width="1"/><circle cx="827.9" cy="759.3" r="3.3" fill="#6e4e2c" stroke="#2a1a08" stroke-width="1"/><circle cx="819.0" cy="768.8" r="3.3" fill="#6e4e2c" stroke="#2a1a08" stroke-width="1"/><circle cx="808.9" cy="777.0" r="3.3" fill="#6e4e2c" stroke="#2a1a08" stroke-width="1"/><circle cx="798.2" cy="784.4" r="3.3" fill="#6e4e2c" stroke="#2a1a08" stroke-width="1"/><circle cx="787.2" cy="791.3" r="3.3" fill="#6e4e2c" stroke="#2a1a08" stroke-width="1"/><circle cx="776.0" cy="798.0" r="3.3" fill="#6e4e2c" stroke="#2a1a08" stroke-width="1"/></g>
<path d="M705.0,588.0 L705.0,588.0 C707.5,588.2 711.2,585.5 720.0,589.0 C728.8,592.5 746.0,600.5 757.5,609.0 C769.0,617.5 780.3,628.2 788.8,640.0 C797.2,651.8 803.3,666.7 808.0,680.0 C812.7,693.3 815.8,708.3 817.0,720.0 C818.2,731.7 817.0,741.7 815.0,750.0 C813.0,758.3 809.2,764.7 805.0,770.0 C800.8,775.3 795.8,777.7 790.0,782.0 C784.2,786.3 775.8,792.3 770.0,796.0 C764.2,799.7 757.5,802.7 755.0,804.0 L745.0,808.0 L720.0,806.0 C722.5,805.0 729.7,802.7 735.0,800.0 C740.3,797.3 746.2,793.7 752.0,790.0 C757.8,786.3 765.3,784.7 770.0,778.0 C774.7,771.3 778.0,759.7 780.0,750.0 C782.0,740.3 783.0,733.8 782.0,720.0 C781.0,706.2 779.2,682.1 774.0,667.5 C768.8,652.9 760.0,641.4 751.0,632.5 C742.0,623.6 727.7,618.4 720.0,614.0 C712.3,609.6 707.5,607.3 705.0,606.0 Z" fill="url(#gpl)"/>
<path d="M705.0,588.0 C707.5,588.2 711.2,585.5 720.0,589.0 C728.8,592.5 746.0,600.5 757.5,609.0 C769.0,617.5 780.3,628.2 788.8,640.0 C797.2,651.8 803.3,666.7 808.0,680.0 C812.7,693.3 815.8,708.3 817.0,720.0 C818.2,731.7 817.0,741.7 815.0,750.0 C813.0,758.3 809.2,764.7 805.0,770.0 C800.8,775.3 795.8,777.7 790.0,782.0 C784.2,786.3 775.8,792.3 770.0,796.0 C764.2,799.7 757.5,802.7 755.0,804.0" fill="none" stroke="#e040f0" stroke-width="2"/>
<path d="M591.0,661.0 L705.0,600.0 L720.0,614.0 C725.2,617.1 742.0,623.6 751.0,632.5 C760.0,641.4 768.8,652.9 774.0,667.5 C779.2,682.1 781.0,706.2 782.0,720.0 C783.0,733.8 782.0,740.3 780.0,750.0 C778.0,759.7 774.7,771.3 770.0,778.0 C765.3,784.7 757.8,786.3 752.0,790.0 C746.2,793.7 740.3,797.3 735.0,800.0 C729.7,802.7 722.5,805.0 720.0,806.0 L720.0,808.0 L600.0,808.0 Z" fill="url(#gch)"/>
<path d="M705.0,606.0 C707.5,607.3 712.3,609.6 720.0,614.0 C727.7,618.4 742.0,623.6 751.0,632.5 C760.0,641.4 768.8,652.9 774.0,667.5 C779.2,682.1 781.0,706.2 782.0,720.0 C783.0,733.8 782.0,740.3 780.0,750.0 C778.0,759.7 774.7,771.3 770.0,778.0 C765.3,784.7 757.8,786.3 752.0,790.0 C746.2,793.7 740.3,797.3 735.0,800.0 C729.7,802.7 722.5,805.0 720.0,806.0" fill="none" stroke="#e040f0" stroke-width="1.5"/>
<path d="M708.0,614.0 C710.4,615.2 716.3,616.7 722.5,621.0 C728.7,625.3 738.6,633.1 745.0,640.0 C751.4,646.9 756.8,656.2 761.0,662.5 C765.2,668.8 766.7,669.6 770.0,677.5 C773.3,685.4 778.5,699.6 781.0,710.0 C783.5,720.4 785.2,730.0 785.0,740.0 C784.8,750.0 783.3,761.7 780.0,770.0 C776.7,778.3 770.8,785.3 765.0,790.0 C759.2,794.7 750.8,795.3 745.0,798.0 C739.2,800.7 732.5,804.7 730.0,806.0" fill="none" stroke="#0e3a58" stroke-width="7" opacity="0.8"/>
<g><circle cx="708.0" cy="614.0" r="2.9" fill="#2a9ac8" stroke="#0a2a40" stroke-width="1.1"/><circle cx="716.3" cy="618.0" r="2.9" fill="#2a9ac8" stroke="#0a2a40" stroke-width="1.1"/><circle cx="724.3" cy="622.5" r="2.9" fill="#2a9ac8" stroke="#0a2a40" stroke-width="1.1"/><circle cx="731.4" cy="628.5" r="2.9" fill="#2a9ac8" stroke="#0a2a40" stroke-width="1.1"/><circle cx="738.4" cy="634.4" r="2.9" fill="#2a9ac8" stroke="#0a2a40" stroke-width="1.1"/><circle cx="745.3" cy="640.5" r="2.9" fill="#2a9ac8" stroke="#0a2a40" stroke-width="1.1"/><circle cx="750.7" cy="648.0" r="2.9" fill="#2a9ac8" stroke="#0a2a40" stroke-width="1.1"/><circle cx="756.0" cy="655.5" r="2.9" fill="#2a9ac8" stroke="#0a2a40" stroke-width="1.1"/><circle cx="761.3" cy="663.1" r="2.9" fill="#2a9ac8" stroke="#0a2a40" stroke-width="1.1"/><circle cx="766.1" cy="671.0" r="2.9" fill="#2a9ac8" stroke="#0a2a40" stroke-width="1.1"/><circle cx="770.5" cy="679.1" r="2.9" fill="#2a9ac8" stroke="#0a2a40" stroke-width="1.1"/><circle cx="773.5" cy="687.8" r="2.9" fill="#2a9ac8" stroke="#0a2a40" stroke-width="1.1"/><circle cx="776.4" cy="696.5" r="2.9" fill="#2a9ac8" stroke="#0a2a40" stroke-width="1.1"/><circle cx="779.4" cy="705.3" r="2.9" fill="#2a9ac8" stroke="#0a2a40" stroke-width="1.1"/><circle cx="781.6" cy="714.2" r="2.9" fill="#2a9ac8" stroke="#0a2a40" stroke-width="1.1"/><circle cx="782.8" cy="723.4" r="2.9" fill="#2a9ac8" stroke="#0a2a40" stroke-width="1.1"/><circle cx="784.0" cy="732.5" r="2.9" fill="#2a9ac8" stroke="#0a2a40" stroke-width="1.1"/><circle cx="784.7" cy="741.6" r="2.9" fill="#2a9ac8" stroke="#0a2a40" stroke-width="1.1"/><circle cx="783.2" cy="750.7" r="2.9" fill="#2a9ac8" stroke="#0a2a40" stroke-width="1.1"/><circle cx="781.7" cy="759.8" r="2.9" fill="#2a9ac8" stroke="#0a2a40" stroke-width="1.1"/><circle cx="780.2" cy="769.0" r="2.9" fill="#2a9ac8" stroke="#0a2a40" stroke-width="1.1"/><circle cx="775.1" cy="776.5" r="2.9" fill="#2a9ac8" stroke="#0a2a40" stroke-width="1.1"/><circle cx="769.6" cy="783.9" r="2.9" fill="#2a9ac8" stroke="#0a2a40" stroke-width="1.1"/><circle cx="763.5" cy="790.6" r="2.9" fill="#2a9ac8" stroke="#0a2a40" stroke-width="1.1"/><circle cx="754.9" cy="794.0" r="2.9" fill="#2a9ac8" stroke="#0a2a40" stroke-width="1.1"/><circle cx="746.4" cy="797.5" r="2.9" fill="#2a9ac8" stroke="#0a2a40" stroke-width="1.1"/><circle cx="738.1" cy="801.7" r="2.9" fill="#2a9ac8" stroke="#0a2a40" stroke-width="1.1"/><circle cx="730.0" cy="806.0" r="2.9" fill="#2a9ac8" stroke="#0a2a40" stroke-width="1.1"/></g>
<ellipse cx="629" cy="749" rx="76.5" ry="91" transform="rotate(10 629 749)" fill="url(#ghead)" stroke="#e040f0" stroke-width="1.6"/>
<path d="M631.5,597.68 L630.5,648.04 A35.0,14.96 0 0 0 700.5,648.04 L699.5,597.68 Z" fill="#e80000"/><path d="M679.1,624.3599999999999 L679.1,661 A34.0,14.96 0 0 0 700.5,648.04 L699.5,624.3599999999999 Z" fill="#b80000" opacity="0.55"/><path d="M639.66,627.3599999999999 L639.66,648.04 L651.9,657.016 L651.9,627.3599999999999 Z" fill="#ff2020" opacity="0.6"/><ellipse cx="665.5" cy="601.68" rx="45.0" ry="26.68" fill="#c00000"/><ellipse cx="665.5" cy="597.68" rx="46.0" ry="26.68" fill="#f00808"/><ellipse cx="666.5" cy="595.68" rx="29.44" ry="14.940800000000001" fill="#a80000"/><ellipse cx="667.5" cy="598.68" rx="23.0" ry="10.1384" fill="#f01010"/><circle cx="629.0" cy="607.8" r="2.6" fill="#e00000" stroke="#7a0000" stroke-width="0.8"/><circle cx="631.9" cy="612.8" r="2.6" fill="#e00000" stroke="#7a0000" stroke-width="0.8"/><circle cx="636.4" cy="617.3" r="2.6" fill="#e00000" stroke="#7a0000" stroke-width="0.8"/><circle cx="642.4" cy="621.1" r="2.6" fill="#e00000" stroke="#7a0000" stroke-width="0.8"/><circle cx="649.4" cy="623.9" r="2.6" fill="#e00000" stroke="#7a0000" stroke-width="0.8"/><circle cx="657.3" cy="625.6" r="2.6" fill="#e00000" stroke="#7a0000" stroke-width="0.8"/><circle cx="665.5" cy="626.2" r="2.6" fill="#e00000" stroke="#7a0000" stroke-width="0.8"/><circle cx="673.7" cy="625.6" r="2.6" fill="#e00000" stroke="#7a0000" stroke-width="0.8"/><circle cx="681.6" cy="623.9" r="2.6" fill="#e00000" stroke="#7a0000" stroke-width="0.8"/><circle cx="688.6" cy="621.1" r="2.6" fill="#e00000" stroke="#7a0000" stroke-width="0.8"/><circle cx="694.6" cy="617.3" r="2.6" fill="#e00000" stroke="#7a0000" stroke-width="0.8"/><circle cx="699.1" cy="612.8" r="2.6" fill="#e00000" stroke="#7a0000" stroke-width="0.8"/><circle cx="702.0" cy="607.8" r="2.6" fill="#e00000" stroke="#7a0000" stroke-width="0.8"/><path d="M767.5,523.46 L766.5,572.8 A31.0,13.2 0 0 0 828.5,572.8 L827.5,523.46 Z" fill="#e80000"/><path d="M809.5,544.9200000000001 L809.5,584 A30.0,13.2 0 0 0 828.5,572.8 L827.5,544.9200000000001 Z" fill="#b80000" opacity="0.55"/><path d="M774.7,547.9200000000001 L774.7,572.8 L785.5,580.72 L785.5,547.9200000000001 Z" fill="#ff2020" opacity="0.6"/><ellipse cx="797.5" cy="527.46" rx="36.0" ry="21.459999999999997" fill="#c00000"/><ellipse cx="797.5" cy="523.46" rx="37.0" ry="21.459999999999997" fill="#f00808"/><ellipse cx="798.5" cy="521.46" rx="23.68" ry="12.0176" fill="#a80000"/><ellipse cx="799.5" cy="524.46" rx="18.5" ry="8.1548" fill="#f01010"/><circle cx="768.1" cy="532.4" r="2.2" fill="#e00000" stroke="#7a0000" stroke-width="0.8"/><circle cx="770.5" cy="536.4" r="2.2" fill="#e00000" stroke="#7a0000" stroke-width="0.8"/><circle cx="774.1" cy="540.0" r="2.2" fill="#e00000" stroke="#7a0000" stroke-width="0.8"/><circle cx="778.9" cy="543.1" r="2.2" fill="#e00000" stroke="#7a0000" stroke-width="0.8"/><circle cx="784.6" cy="545.3" r="2.2" fill="#e00000" stroke="#7a0000" stroke-width="0.8"/><circle cx="790.9" cy="546.7" r="2.2" fill="#e00000" stroke="#7a0000" stroke-width="0.8"/><circle cx="797.5" cy="547.2" r="2.2" fill="#e00000" stroke="#7a0000" stroke-width="0.8"/><circle cx="804.1" cy="546.7" r="2.2" fill="#e00000" stroke="#7a0000" stroke-width="0.8"/><circle cx="810.4" cy="545.3" r="2.2" fill="#e00000" stroke="#7a0000" stroke-width="0.8"/><circle cx="816.1" cy="543.1" r="2.2" fill="#e00000" stroke="#7a0000" stroke-width="0.8"/><circle cx="820.9" cy="540.0" r="2.2" fill="#e00000" stroke="#7a0000" stroke-width="0.8"/><circle cx="824.5" cy="536.4" r="2.2" fill="#e00000" stroke="#7a0000" stroke-width="0.8"/><circle cx="826.9" cy="532.4" r="2.2" fill="#e00000" stroke="#7a0000" stroke-width="0.8"/><path d="M1085.0,374.02 L1084.0,395.72 A13.0,5.28 0 0 0 1110.0,395.72 L1109.0,374.02 Z" fill="#e80000"/><path d="M1101.8,385.03999999999996 L1101.8,399 A12.0,5.28 0 0 0 1110.0,395.72 L1109.0,385.03999999999996 Z" fill="#b80000" opacity="0.55"/><path d="M1087.88,388.03999999999996 L1087.88,395.72 L1092.2,398.888 L1092.2,388.03999999999996 Z" fill="#ff2020" opacity="0.6"/><ellipse cx="1097" cy="377.02" rx="18.0" ry="11.02" fill="#c00000"/><ellipse cx="1097" cy="374.02" rx="19.0" ry="11.02" fill="#f00808"/><ellipse cx="1098" cy="372.02" rx="12.16" ry="6.171200000000001" fill="#a80000"/><ellipse cx="1099" cy="375.02" rx="9.5" ry="4.1876" fill="#f01010"/>
<line x1="1259.4" y1="154" x2="1264.5" y2="292" stroke="#40d8f0" stroke-width="1.2"/><line x1="1259" y1="200" x2="1263.6" y2="286" stroke="#c83030" stroke-width="1.2"/><line x1="1219" y1="176.5" x2="1226" y2="316" stroke="#40d8f0" stroke-width="1.2"/><line x1="1137" y1="230.5" x2="1141.5" y2="349" stroke="#c83030" stroke-width="1.2"/><line x1="1148.4" y1="218.5" x2="1153.5" y2="344.5" stroke="#40d8f0" stroke-width="1.2"/><line x1="1290" y1="307" x2="1365" y2="339" stroke="#40d8f0" stroke-width="1.2"/><line x1="940" y1="339" x2="949" y2="544" stroke="#40d8f0" stroke-width="1.2"/><line x1="620" y1="525" x2="620" y2="700" stroke="#c83030" stroke-width="1.2"/><line x1="623" y1="530" x2="628" y2="690" stroke="#40d8f0" stroke-width="1.2"/><line x1="701.5" y1="486" x2="703.7" y2="577" stroke="#c83030" stroke-width="1.2"/><line x1="712.5" y1="482.5" x2="716" y2="622" stroke="#40d8f0" stroke-width="1.2"/><line x1="665" y1="555" x2="665" y2="607" stroke="#40d8f0" stroke-width="1.2"/><line x1="645" y1="680" x2="728" y2="714" stroke="#50c8f0" stroke-width="1.2"/><line x1="1197" y1="548" x2="1197" y2="650" stroke="#c83030" stroke-width="1.2"/><line x1="1277.5" y1="484" x2="1279" y2="589" stroke="#c83030" stroke-width="1.2"/><line x1="705" y1="782" x2="745" y2="800" stroke="#e02020" stroke-width="1.2" stroke-dasharray="4 2"/><line x1="674.5" y1="529.0" x2="628.6" y2="557.2" stroke="#0e900e" stroke-width="5.0"/><path d="M617.5,564.0 L625.2,551.7 L632.0,562.7 Z" fill="#0e900e"/><path d="M646.5,538.0 C636.5,557.0 660.5,561.0 659.5,543.0" fill="none" stroke="#28d828" stroke-width="3.0"/><line x1="662.5" y1="554.0" x2="662.5" y2="494.0" stroke="#0a0ab8" stroke-width="5.5"/><path d="M662.5,480 L669.0,494.0 L656.0,494.0 Z" fill="#0a0ab8"/><path d="M653.5,516.0 C660.5,510.0 676.5,511.0 674.5,519.0 C672.5,525.0 660.5,525.0 653.5,523.0" fill="none" stroke="#1010c0" stroke-width="3.0"/><line x1="650.5" y1="532.0" x2="700.6" y2="553.8" stroke="#e01010" stroke-width="5.0"/><path d="M712.5,559.0 L698.0,559.8 L703.2,547.9 Z" fill="#e01010"/><path d="M674.5,543.0 C668.5,563.0 692.5,563.0 688.5,541.0" fill="none" stroke="#b01010" stroke-width="3.0"/><line x1="807.6" y1="467.0" x2="766.3" y2="495.6" stroke="#0e900e" stroke-width="5.0"/><path d="M755.6,503.0 L762.6,490.3 L770.0,500.9 Z" fill="#0e900e"/><path d="M779.6,476.0 C769.6,495.0 793.6,499.0 792.6,481.0" fill="none" stroke="#28d828" stroke-width="3.0"/><line x1="795.6" y1="492.0" x2="795.6" y2="440.0" stroke="#0a0ab8" stroke-width="5.5"/><path d="M795.6,426 L802.1,440.0 L789.1,440.0 Z" fill="#0a0ab8"/><path d="M786.6,454.0 C793.6,448.0 809.6,449.0 807.6,457.0 C805.6,463.0 793.6,463.0 786.6,461.0" fill="none" stroke="#1010c0" stroke-width="3.0"/><line x1="783.6" y1="470.0" x2="828.9" y2="491.4" stroke="#e01010" stroke-width="5.0"/><path d="M840.6,497.0 L826.1,497.3 L831.6,485.6 Z" fill="#e01010"/><path d="M807.6,481.0 C801.6,501.0 825.6,501.0 821.6,479.0" fill="none" stroke="#b01010" stroke-width="3.0"/><line x1="1250.0" y1="584.0" x2="1204.0" y2="613.1" stroke="#0e900e" stroke-width="5.0"/><path d="M1193.0,620.0 L1200.5,607.6 L1207.5,618.6 Z" fill="#0e900e"/><path d="M1222.0,593.0 C1212.0,612.0 1236.0,616.0 1235.0,598.0" fill="none" stroke="#28d828" stroke-width="3.0"/><line x1="1238" y1="578.0" x2="1238.0" y2="638.0" stroke="#0a0ab8" stroke-width="5.5"/><path d="M1238,652 L1231.5,638.0 L1244.5,638.0 Z" fill="#0a0ab8"/><path d="M1229.0,571.0 C1236.0,565.0 1252.0,566.0 1250.0,574.0 C1248.0,580.0 1236.0,580.0 1229.0,578.0" fill="none" stroke="#1010c0" stroke-width="3.0"/><line x1="1226.0" y1="587.0" x2="1200.3" y2="578.2" stroke="#e01010" stroke-width="5.0"/><path d="M1188.0,574.0 L1202.4,572.1 L1198.2,584.4 Z" fill="#e01010"/><path d="M1250.0,598.0 C1244.0,618.0 1268.0,618.0 1264.0,596.0" fill="none" stroke="#b01010" stroke-width="3.0"/><g transform="translate(1238,598) scale(1,-1) translate(-1238,-598)"></g><line x1="1099.8" y1="365.2" x2="1096.6" y2="367.3" stroke="#0e900e" stroke-width="1.75"/><path d="M1092.8,369.75 L1095.4,365.4 L1097.9,369.2 Z" fill="#0e900e"/><path d="M1090.0,368.35 C1086.5,375.0 1094.8999999999999,376.4 1094.55,370.1" fill="none" stroke="#28d828" stroke-width="1.0499999999999998"/><line x1="1095.6" y1="373.95" x2="1095.6" y2="346.9" stroke="#0a0ab8" stroke-width="1.9249999999999998"/><path d="M1095.6,342 L1097.9,346.9 L1093.3,346.9 Z" fill="#0a0ab8"/><path d="M1092.4499999999998,360.65 C1094.8999999999999,358.55 1100.5,358.9 1099.8,361.7 C1099.1,363.8 1094.8999999999999,363.8 1092.4499999999998,363.1" fill="none" stroke="#1010c0" stroke-width="1.0499999999999998"/><line x1="1091.3999999999999" y1="366.25" x2="1094.9" y2="367.7" stroke="#e01010" stroke-width="1.75"/><path d="M1099.1,369.4 L1094.0,369.8 L1095.8,365.6 Z" fill="#e01010"/><path d="M1099.8,370.1 C1097.6999999999998,377.1 1106.1,377.1 1104.6999999999998,369.4" fill="none" stroke="#b01010" stroke-width="1.0499999999999998"/><line x1="1118" y1="656" x2="1118.0" y2="686.0" stroke="#1010c8" stroke-width="5"/><path d="M1118,699 L1112.0,686.0 L1124.0,686.0 Z" fill="#1010c8"/><line x1="1127" y1="654" x2="1087.4" y2="667.0" stroke="#10a010" stroke-width="4"/><path d="M1075,671 L1085.5,661.3 L1089.2,672.7 Z" fill="#10a010"/><path d="M1102,668 C1098,656 1138,652 1136,664" fill="none" stroke="#1818d0" stroke-width="3"/><text x="1212" y="154" fill="#a83848" font-family="Liberation Sans" font-size="12" xml:space="preserve">13424.00 mm  [70]</text><text x="1182" y="175.6" fill="#1818d8" font-family="Liberation Sans" font-size="12" xml:space="preserve">Channel Shell 2</text><text x="1092" y="224.5" fill="#a83848" font-family="Liberation Sans" font-size="12" xml:space="preserve">10876.00 mm  [50]</text><text x="1396.5" y="358" fill="#48d8f8" font-family="Liberation Sans" font-size="12" xml:space="preserve">Liquid:  70</text><text x="932.5" y="339" fill="#1818d8" font-family="Liberation Sans" font-size="12" xml:space="preserve">Shell</text><text x="658.7" y="482" fill="#d84848" font-family="Liberation Sans" font-size="12" xml:space="preserve">1670.00 mm  [30]</text><text x="630" y="503.7" fill="#1818d8" font-family="Liberation Sans" font-size="12" xml:space="preserve">Channel Shell</text><text x="590" y="528" fill="#d84848" font-family="Liberation Sans" font-size="12" xml:space="preserve">0.00 mm  [10]</text><text x="666" y="602" fill="#2a20c8" font-family="Liberation Sans" font-size="12" xml:space="preserve">N1-D</text><text x="707" y="602" fill="#2a20c8" font-family="Liberation Sans" font-size="12" xml:space="preserve">00</text><text x="799" y="527" fill="#2a20c8" font-family="Liberation Sans" font-size="12" xml:space="preserve">N4-D</text><text x="836" y="527" fill="#2a20c8" font-family="Liberation Sans" font-size="12" xml:space="preserve">750</text><text x="761" y="731" fill="#48d8f8" font-family="Liberation Sans" font-size="12" xml:space="preserve">Liquid:  10</text><text x="1153.5" y="606" fill="#1818d8" font-family="Liberation Sans" font-size="12" xml:space="preserve">750</text><text x="1271" y="539" fill="#1818d8" font-family="Liberation Sans" font-size="12" xml:space="preserve">00</text><text x="1248" y="604" fill="#d84848" font-family="Liberation Sans" font-size="12" xml:space="preserve">499.00 mm  [80]</text><text x="1155.6" y="650" fill="#d84848" font-family="Liberation Sans" font-size="12" xml:space="preserve">11829.00 mm  [60]</text>
</svg>
<!--/MODEL-->

</body></html>
